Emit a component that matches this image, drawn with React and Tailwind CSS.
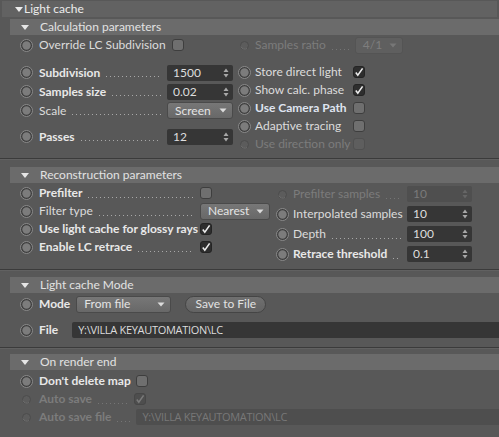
import React from "react";

const Radio = ({ dis }) =>
  dis ? (
    <svg width="13" height="13" viewBox="0 0 13 13" className="shrink-0">
      <circle cx="6.5" cy="6.5" r="4" fill="#5c5c5c" stroke="#4c4c4c" />
      <path d="M3 7.5 A4 4 0 0 0 9 9.5" stroke="#6e6e6e" fill="none" />
    </svg>
  ) : (
    <svg width="13" height="13" viewBox="0 0 13 13" className="shrink-0">
      <circle cx="6.5" cy="6.5" r="6" fill="#3f3f3f" stroke="#8a8a8a" strokeWidth="1" />
      <circle cx="6.5" cy="6.5" r="4.2" fill="#7c7c7c" />
    </svg>
  );

const Check = ({ on, dis }) =>
  on ? (
    <div
      className={`w-[12px] h-[12px] rounded-[3px] shrink-0 flex items-center justify-center ${
        dis ? "bg-[#4e4e4e] border border-[#474747]" : "bg-[#2e2e2e] border border-[#242424]"
      }`}
    >
      <svg width="10" height="10" viewBox="0 0 10 10">
        <path
          d="M1.8 5.6 L3.8 8.2 L8.6 1.4"
          stroke={dis ? "#7a7a7a" : "#ececec"}
          strokeWidth="1.6"
          fill="none"
        />
      </svg>
    </div>
  ) : (
    <div
      className={`w-[12px] h-[12px] rounded-[3px] shrink-0 border ${
        dis ? "bg-[#5e5e5e] border-[#505050]" : "bg-[#6f6f6f] border-[#3e3e3e]"
      }`}
    />
  );

// dotted leader: 1px dots every 4px, sitting on the text baseline
const Leader = ({ dis, w }) => (
  <div
    className={`${w ? w : "flex-1 min-w-0"} h-px translate-y-[4px] ml-[6px] mr-[6px] bg-repeat-x bg-[length:4px_1px] ${
      dis
        ? "bg-[linear-gradient(to_right,#757575_1px,transparent_1px)]"
        : "bg-[linear-gradient(to_right,#a8a8a8_1px,transparent_1px)]"
    }`}
  />
);

const Spinner = ({ dis }) => (
  <svg width="6" height="10" viewBox="0 0 6 10" className="absolute right-[4px] top-1/2 -translate-y-1/2">
    <path d="M3 0.5 L5.5 4 L0.5 4 Z" fill={dis ? "#666" : "#a8a8a8"} />
    <path d="M3 9.5 L5.5 6 L0.5 6 Z" fill={dis ? "#666" : "#a8a8a8"} />
  </svg>
);

const Field = ({ value, dis, w = "w-[66px]" }) => (
  <div
    className={`${w} h-[16px] rounded-[2px] relative flex items-center pl-[6px] shrink-0 ${
      dis ? "bg-[#4f4f4f] text-[#7a7a7a]" : "bg-[#363636] text-[#dedede]"
    }`}
  >
    {value}
    <Spinner dis={dis} />
  </div>
);

const Select = ({ value, w, dis }) => (
  <div
    className={`${w} h-[17px] rounded-[3px] flex items-center justify-between pl-[7px] pr-[5px] shrink-0 border ${
      dis
        ? "bg-[#5f5f5f] border-[#545454] text-[#7e7e7e]"
        : "bg-gradient-to-b from-[#777777] to-[#686868] border-[#4a4a4a] text-[#e4e4e4]"
    }`}
  >
    <span>{value}</span>
    <svg width="8" height="5" viewBox="0 0 8 5">
      <path d="M0.5 0.5 L7.5 0.5 L4 4.5 Z" fill={dis ? "#777" : "#dcdcdc"} />
    </svg>
  </div>
);

const Label = ({ children, bold, dis }) => (
  <span
    className={`whitespace-nowrap ${bold ? "font-bold" : ""} ${
      dis ? "text-[#7c7c7c]" : bold ? "text-[#e8e8e8]" : "text-[#dcdcdc]"
    }`}
  >
    {children}
  </span>
);

const SubHeader = ({ title }) => (
  <div className="ml-[10px] h-[16px] bg-[#6b6b6b] flex items-center text-[#e2e2e2]">
    <svg width="8" height="5" viewBox="0 0 8 5" className="ml-[11px]">
      <path d="M0 0 L8 0 L4 5 Z" fill="#e6e6e6" />
    </svg>
    <span className="ml-[11px]">{title}</span>
  </div>
);

const Separator = () => (
  <div>
    <div className="h-px bg-[#3b3b3b]" />
    <div className="h-px bg-[#616161]" />
  </div>
);

export default function App() {
  return (
    <div className="w-[499px] h-[437px] overflow-hidden bg-[#585858] font-['Lato',sans-serif] text-[12px] leading-[14px] pt-px">
      {/* main header */}
      <div className="mx-[2px] h-[16px] bg-[#626262] flex items-center text-[#ececec]">
        <svg width="8" height="5" viewBox="0 0 8 5" className="ml-[13px]">
          <path d="M0 0 L8 0 L4 5 Z" fill="#ececec" />
        </svg>
        <span className="ml-[1px]">Light cache</span>
      </div>

      {/* Calculation parameters */}
      <div className="mt-[2px]">
        <SubHeader title="Calculation parameters" />
        <div className="flex pt-px">
          <div className="w-[233px] flex flex-col">
            <div className="h-[18px] flex items-center pl-[20px]">
              <Radio />
              <span className="ml-[6px]"><Label>Override LC Subdivision</Label></span>
              <span className="ml-[6px]"><Check /></span>
            </div>
            <div className="mt-[9px] h-[19px] flex items-center pl-[20px]">
              <Radio />
              <span className="ml-[6px]"><Label bold>Subdivision</Label></span>
              <Leader />
              <Field value="1500" />
            </div>
            <div className="h-[19px] flex items-center pl-[20px]">
              <Radio />
              <span className="ml-[6px]"><Label bold>Samples size</Label></span>
              <Leader />
              <Field value="0.02" />
            </div>
            <div className="h-[19px] flex items-center pl-[20px]">
              <Radio />
              <span className="ml-[6px]"><Label>Scale</Label></span>
              <Leader />
              <Select value="Screen" w="w-[66px]" />
            </div>
            <div className="mt-[7px] h-[19px] flex items-center pl-[20px]">
              <Radio />
              <span className="ml-[6px]"><Label bold>Passes</Label></span>
              <Leader />
              <Field value="12" />
            </div>
          </div>
          <div className="flex-1 flex flex-col pl-[5px]">
            <div className="h-[18px] flex items-center">
              <Radio dis />
              <span className="ml-[4px]"><Label dis>Samples ratio</Label></span>
              <Leader dis w="w-[17px]" />
              <Select value="4/1" w="w-[48px]" dis />
            </div>
            {[
              ["Store direct light", false, true],
              ["Show calc. phase", false, true],
              ["Use Camera Path", true, false],
              ["Adaptive tracing", false, false],
            ].map(([t, b, on], i) => (
              <div key={t} className={`${i === 0 ? "mt-[9px]" : ""} h-[18px] flex items-center`}>
                <Radio />
                <span className="ml-[4px] w-[98px]">
                  {b ? (
                    <span className="font-bold whitespace-nowrap text-[#dfe4f0]">{t}</span>
                  ) : (
                    <Label>{t}</Label>
                  )}
                </span>
                <Check on={on} />
              </div>
            ))}
            <div className="h-[18px] flex items-center">
              <Radio dis />
              <span className="ml-[4px] w-[98px]"><Label dis>Use direction only</Label></span>
              <Check dis />
            </div>
          </div>
        </div>
      </div>

      <div className="mt-[5px]">
        <Separator />
      </div>

      {/* Reconstruction parameters */}
      <div className="mt-[7px]">
        <SubHeader title="Reconstruction parameters" />
        <div className="flex pt-px">
          <div className="w-[272px] flex flex-col">
            <div className="h-[18px] flex items-center pl-[20px]">
              <Radio />
              <span className="ml-[6px]"><Label bold>Prefilter</Label></span>
              <Leader />
              <div className="w-[72px] flex"><Check /></div>
            </div>
            <div className="h-[18px] flex items-center pl-[20px]">
              <Radio />
              <span className="ml-[6px]"><Label>Filter type</Label></span>
              <Leader />
              <div className="w-[72px] flex"><Select value="Nearest" w="w-[70px]" /></div>
            </div>
            <div className="h-[18px] flex items-center pl-[20px]">
              <Radio />
              <span className="ml-[6px]"><Label bold>Use light cache for glossy rays</Label></span>
              <div className="flex-1" />
              <div className="w-[72px] flex"><Check on /></div>
            </div>
            <div className="h-[18px] flex items-center pl-[20px]">
              <Radio />
              <span className="ml-[6px]"><Label bold>Enable LC retrace</Label></span>
              <Leader />
              <div className="w-[72px] flex"><Check on /></div>
            </div>
          </div>
          <div className="w-[200px] flex flex-col pl-[4px]">
            <div className="h-[20px] flex items-center">
              <Radio dis />
              <span className="ml-[4px]"><Label dis>Prefilter samples</Label></span>
              <Leader dis />
              <Field value="10" dis w="w-[65px]" />
            </div>
            <div className="h-[20px] flex items-center">
              <Radio />
              <span className="ml-[4px]"><Label>Interpolated samples</Label></span>
              <div className="flex-1" />
              <Field value="10" w="w-[65px]" />
            </div>
            <div className="h-[20px] flex items-center">
              <Radio />
              <span className="ml-[4px]"><Label>Depth</Label></span>
              <Leader />
              <Field value="100" w="w-[65px]" />
            </div>
            <div className="h-[20px] flex items-center">
              <Radio />
              <span className="ml-[4px]"><Label bold>Retrace threshold</Label></span>
              <Leader />
              <Field value="0.1" w="w-[65px]" />
            </div>
          </div>
        </div>
      </div>

      <div className="mt-[5px]">
        <Separator />
      </div>

      {/* Light cache Mode */}
      <div className="mt-[6px]">
        <SubHeader title="Light cache Mode" />
        <div className="pt-[2px]">
          <div className="h-[18px] flex items-center pl-[20px]">
            <Radio />
            <span className="ml-[6px]"><Label bold>Mode</Label></span>
            <span className="ml-[6px]"><Select value="From file" w="w-[95px]" /></span>
            <div className="ml-[14px] w-[81px] h-[17px] rounded-full bg-gradient-to-b from-[#707070] to-[#636363] border border-[#454545] flex items-center justify-center text-[#e2e2e2]">
              Save to File
            </div>
          </div>
          <div className="mt-[8px] h-[18px] flex items-center pl-[20px]">
            <Radio />
            <span className="ml-[6px]"><Label bold>File</Label></span>
            <div className="ml-[14px] flex-1 h-[16px] bg-[#363636] rounded-l-[2px] flex items-center pl-[6px] text-[#dcdcdc] text-[11px] font-['Open_Sans',sans-serif] tracking-[-0.3px]">
              Y:\VILLA KEYAUTOMATION\LC
            </div>
          </div>
        </div>
      </div>

      <div className="mt-[8px]">
        <Separator />
      </div>

      {/* On render end */}
      <div className="mt-[5px]">
        <SubHeader title="On render end" />
        <div className="pt-[2px]">
          <div className="h-[18px] flex items-center pl-[20px]">
            <Radio />
            <span className="ml-[6px]"><Label bold>Don't delete map</Label></span>
            <span className="ml-[5px]"><Check /></span>
          </div>
          <div className="h-[18px] flex items-center pl-[20px] w-[146px]">
            <Radio dis />
            <span className="ml-[6px]"><Label bold dis>Auto save</Label></span>
            <Leader dis />
            <Check on dis />
          </div>
          <div className="h-[18px] flex items-center pl-[20px]">
            <Radio dis />
            <span className="ml-[6px]"><Label bold dis>Auto save file</Label></span>
            <Leader dis w="w-[13px]" />
            <div className="flex-1 h-[16px] bg-[#4e4e4e] rounded-l-[2px] flex items-center pl-[6px] text-[#787878] text-[11px] font-['Open_Sans',sans-serif] tracking-[-0.3px]">
              Y:\VILLA KEYAUTOMATION\LC
            </div>
          </div>
        </div>
      </div>
    </div>
  );
}
